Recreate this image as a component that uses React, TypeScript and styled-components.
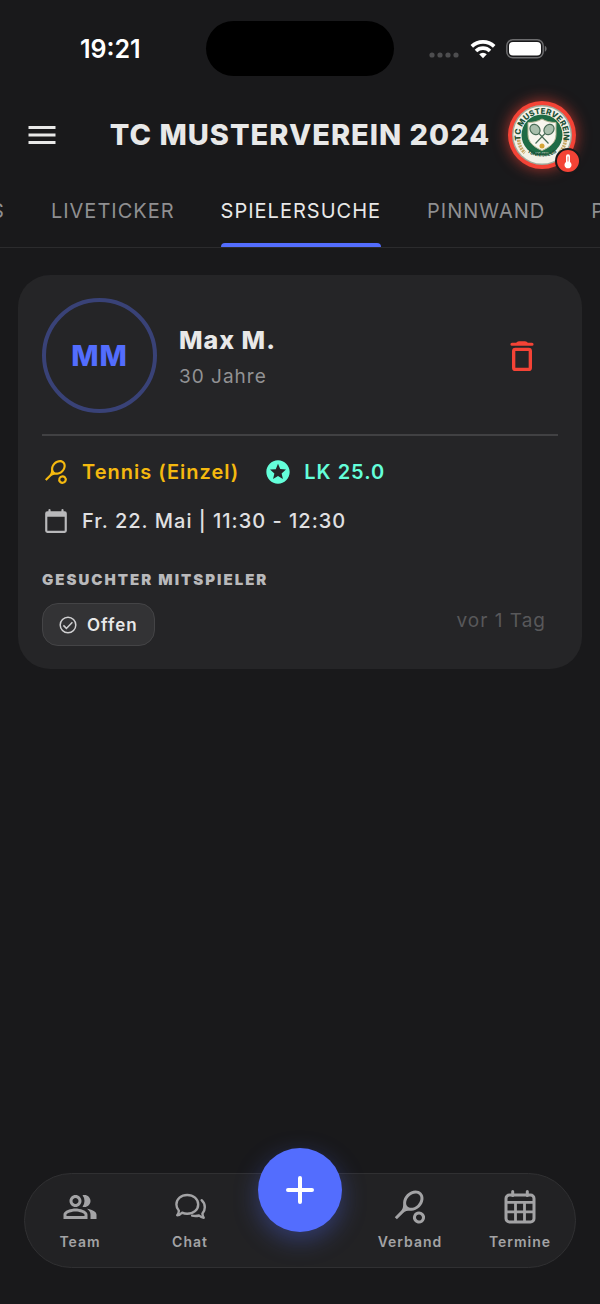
import React from 'react';
import styled, { createGlobalStyle } from 'styled-components';
import { MdMenu, MdOutlinePeopleAlt, MdSportsTennis, MdStars } from 'react-icons/md';

const GlobalStyle = createGlobalStyle`
  * {
    box-sizing: border-box;
  }
  body {
    margin: 0;
    background: #19191b;
    color: #e8e8e8;
    font-family: Inter, "Liberation Sans", sans-serif;
    overflow-x: hidden;
  }
  button {
    padding: 0;
    border: none;
    background: none;
    color: inherit;
    font: inherit;
    cursor: pointer;
  }
`;

const Screen = styled.div`
  display: flex;
  flex-direction: column;
  min-height: 100vh;
`;

const StatusBar = styled.div`
  display: grid;
  grid-template-columns: 1fr auto 1fr;
  align-items: center;
  padding: 21px 52px 0 80px;
`;

const Clock = styled.span`
  font-size: 25px;
  line-height: 28px;
  font-weight: 600;
  color: #fff;
`;

const Island = styled.div`
  width: 188px;
  height: 55px;
  margin-right: 28px;
  border-radius: 28px;
  background: #000;
`;

const StatusIcons = styled.div`
  display: flex;
  align-items: center;
  justify-content: flex-end;
  gap: 10px;
`;

const Header = styled.header`
  display: grid;
  grid-template-columns: 1fr auto 1fr;
  align-items: center;
  height: 118px;
  padding: 0 24px;
`;

const MenuButton = styled.button`
  display: flex;
  justify-self: start;
`;

const Title = styled.h1`
  margin: 0;
  font-size: 29px;
  line-height: 36px;
  font-weight: 800;
  letter-spacing: 1px;
  white-space: nowrap;
`;

const ClubButton = styled.button`
  position: relative;
  justify-self: end;
  width: 68px;
  height: 68px;
  border-radius: 34px;
  background: #f44336;
  box-shadow: 0 0 14px 1px rgba(244, 67, 54, 0.6);
`;

const ClubBadge = styled.span`
  position: absolute;
  right: -5px;
  bottom: -5px;
  display: flex;
  align-items: center;
  justify-content: center;
  width: 26px;
  height: 26px;
  border: 2px solid #19191b;
  border-radius: 13px;
  background: #f44336;
`;

const Tabs = styled.nav`
  display: flex;
  justify-content: center;
  gap: 46px;
  height: 54px;
  padding-right: 4px;
  border-bottom: 1px solid #2b2b2d;
  overflow: hidden;
`;

const Tab = styled.button<{ $active?: boolean }>`
  display: flex;
  flex: none;
  flex-direction: column;
  justify-content: space-between;
  height: 53px;
  padding-top: 5px;
  color: ${p => (p.$active ? '#e8e8e8' : '#8f8f91')};
  font-size: 20px;
  line-height: 24px;
  letter-spacing: 1px;
  &::after {
    content: '';
    width: 100%;
    height: 4px;
    border-radius: 4px 4px 0 0;
    background: ${p => (p.$active ? '#536dfe' : 'transparent')};
  }
`;

const Card = styled.article`
  margin: 27px 18px 0;
  padding: 23px 24px;
  border-radius: 32px;
  background: #252527;
`;

const Player = styled.div`
  display: flex;
  align-items: center;
  padding-bottom: 21px;
  border-bottom: 2px solid #414143;
`;

const Avatar = styled.div`
  display: flex;
  align-items: center;
  justify-content: center;
  width: 115px;
  height: 115px;
  margin-right: 22px;
  border: 4px solid #394277;
  border-radius: 50%;
  color: #536dfe;
  font-size: 29px;
  font-weight: 800;
  letter-spacing: 1px;
`;

const PlayerText = styled.div`
  flex: 1;
  padding-top: 7px;
`;

const Name = styled.h2`
  margin: 0;
  font-size: 25px;
  line-height: 36px;
  font-weight: 800;
  letter-spacing: 1px;
`;

const Age = styled.p`
  margin: 0;
  color: #929294;
  font-size: 19px;
  line-height: 38px;
  letter-spacing: 1px;
`;

const DeleteButton = styled.button`
  display: flex;
  margin-right: 16px;
`;

const Details = styled.div`
  display: flex;
  align-items: center;
  gap: 25px;
  margin-top: 20px;
`;

const Detail = styled.div<{ $color: string; $weight: number }>`
  display: flex;
  align-items: center;
  gap: 12px;
  color: ${p => p.$color};
  font-size: 20px;
  line-height: 32px;
  font-weight: ${p => p.$weight};
  letter-spacing: 1px;
`;

const DetailIcon = styled.span`
  display: flex;
  justify-content: center;
  width: 28px;
`;

const DateRow = styled(Details)`
  margin-top: 17px;
`;

const SectionLabel = styled.h3`
  margin: 33px 0 13px;
  color: #b9b9bb;
  font-size: 15px;
  line-height: 20px;
  font-weight: 900;
  letter-spacing: 2px;
`;

const CardFooter = styled.div`
  display: flex;
  align-items: flex-start;
  justify-content: space-between;
`;

const Chip = styled.div`
  display: flex;
  align-items: center;
  gap: 10px;
  height: 43px;
  padding: 0 16px;
  border: 1px solid #444446;
  border-radius: 16px;
  background: #333335;
  font-size: 17px;
  font-weight: 600;
  letter-spacing: 1px;
`;

const Posted = styled.time`
  margin-right: 12px;
  color: #58585a;
  font-size: 19px;
  line-height: 36px;
  letter-spacing: 1px;
`;

const BottomBar = styled.nav`
  display: grid;
  grid-template-columns: repeat(5, 1fr);
  height: 95px;
  margin: auto 24px 36px;
  border: 1px solid #303032;
  border-radius: 48px;
  background: #222224;
`;

const NavItem = styled.button`
  display: flex;
  flex-direction: column;
  align-items: center;
  padding-top: 15px;
  gap: 7px;
  color: #a3a3a5;
  font-size: 14px;
  line-height: 20px;
  font-weight: 600;
  letter-spacing: 1px;
`;

const AddButton = styled.button`
  display: flex;
  align-items: center;
  justify-content: center;
  justify-self: center;
  width: 84px;
  height: 84px;
  margin-top: -26px;
  border-radius: 42px;
  background: #536dfe;
  box-shadow: 0 8px 24px rgba(83, 109, 254, 0.35);
`;

const SignalDots = () => (
  <svg width="31" height="20" viewBox="0 0 31 20" fill="#4d4d4f">
    <circle cx="3" cy="16" r="2.6" />
    <circle cx="11" cy="16" r="2.6" />
    <circle cx="19" cy="16" r="2.6" />
    <circle cx="27" cy="16" r="2.6" />
  </svg>
);

const Wifi = () => (
  <svg width="26" height="20" viewBox="0 0 26 20" fill="none" stroke="#fff" strokeWidth="3.6">
    <path d="M1.8 7.4a16 16 0 0 1 22.4 0" />
    <path d="M6 12a10 10 0 0 1 14 0" />
    <path d="M13 19.3l-3.8-4a5.4 5.4 0 0 1 7.6 0z" fill="#fff" stroke="none" />
  </svg>
);

const Battery = () => (
  <svg width="42" height="20" viewBox="0 0 42 20">
    <rect x="0.8" y="0.8" width="36.4" height="18" rx="6" fill="none" stroke="#6c6c6e" strokeWidth="1.5" />
    <rect x="3" y="3" width="32" height="13.6" rx="4" fill="#fff" />
    <path d="M38.8 6.8c2.4 1 2.4 5 0 6z" fill="#6c6c6e" />
  </svg>
);

const ClubLogo = () => (
  <svg width="68" height="68" viewBox="0 0 68 68" role="img" aria-label="TC Musterverein">
    <defs>
      <path id="arcTop" d="M13 39a21.5 21.5 0 1 1 42 0" />
      <path id="arcBottom" d="M10 42a28 28 0 0 0 48 0" />
    </defs>
    <circle cx="34" cy="34" r="30" fill="#9eab9d" />
    <circle cx="34" cy="34" r="28.6" fill="#f3f1e7" />
    <circle cx="34" cy="34" r="20.5" fill="#1f6b45" />
    <path d="M34 18c4 2.5 9 3.5 14 3.5v12c0 8-6 12.500-14 16-8-3.500-14-8-14-16v-12C25 21.500 30 20.500 34 18z" fill="#f8f6ee" stroke="#b8b996" strokeWidth="1" />
    <g stroke="#496d57" strokeWidth="1.2">
      <ellipse cx="27" cy="28.5" rx="4.6" ry="5.6" transform="rotate(-42 27 28.5)" fill="#a9bfac" />
      <ellipse cx="41" cy="28.5" rx="4.6" ry="5.6" transform="rotate(42 41 28.5)" fill="#a9bfac" />
      <path d="M31 32.500l9.500 10M37 32.500l-9.500 10" />
    </g>
    <circle cx="34" cy="45" r="2.5" fill="#d5a537" />
    <g fill="none" stroke="#c8a867" strokeWidth="3.6" strokeDasharray="2 0.8">
      <path d="M10.500 36c0 8 3 13 7.500 17" />
      <path d="M57.500 36c0 8-3 13-7.500 17" />
    </g>
    <path d="M18 50c9 6 23 6 32 0l3 4c-9 9-29 9-38 0z" fill="#f3f1e7" />
    <path d="M24 49c6 2.500 14 2.500 20 0v3.500c-6 2-14 2-20 0z" fill="#1f6b45" />
    <text x="34" y="53" textAnchor="middle" fontSize="2.6" fontWeight="700" fill="#d8dfcf">EST. 2024</text>
    <text fontSize="8" fontWeight="800" fill="#1c5038" textAnchor="middle">
      <textPath href="#arcTop" startOffset="50%">TC MUSTERVEREIN</textPath>
    </text>
    <text fontSize="4.8" fontWeight="800" fill="#1c5038" textAnchor="middle">
      <textPath href="#arcBottom" startOffset="50%">TENNISCLUB</textPath>
    </text>
  </svg>
);

const Thermometer = () => (
  <svg width="10" height="16" viewBox="0 0 10 16" fill="none">
    <path d="M3 9V3.300a2 2 0 0 1 4 0V9a3.500 3.500 0 1 1-4 0z" fill="#fff" />
    <path d="M5 3.500v5" stroke="#f44336" strokeWidth="0.8" />
  </svg>
);

const Trash = () => (
  <svg width="40" height="40" viewBox="0 0 24 24" fill="#f44336">
    <path d="M15.500 4l-.7-.5a2 2 0 0 0-1-.3h-3.600a2 2 0 0 0-1 .3L8.500 4H6a.95.950 0 0 0 0 1.900h12a.95.950 0 0 0 0-1.900z" />
    <path fillRule="evenodd" d="M6 9a2 2 0 0 1 2-2h8a2 2 0 0 1 2 2v10a2 2 0 0 1-2 2H8a2 2 0 0 1-2-2zm2 0v10h8V9z" />
  </svg>
);

const Calendar = () => (
  <svg width="26" height="26" viewBox="0 0 24 24" fill="#b9b9bb">
    <path fillRule="evenodd" d="M20 3h-1V2a1 1 0 0 0-2 0v1H7V2a1 1 0 0 0-2 0v1H4a2 2 0 0 0-2 2v16a2 2 0 0 0 2 2h16a2 2 0 0 0 2-2V5a2 2 0 0 0-2-2zM4 8h16v13H4z" />
  </svg>
);

const CheckCircle = () => (
  <svg width="18" height="18" viewBox="0 0 18 18" fill="none" stroke="#d0d0d2" strokeWidth="1.5">
    <circle cx="9" cy="9" r="7.8" />
    <path d="M4.400 9.400l3 3L13.400 6.200" />
  </svg>
);

const Chats = () => (
  <svg width="36" height="36" viewBox="0 0 36 36" fill="none" stroke="currentColor" strokeWidth="2.4" strokeLinejoin="round" strokeLinecap="round">
    <path d="M15.200 6c6.200 0 11 4.100 11 9.400s-4.800 9.400-11 9.400c-1.900 0-3.600-.4-5.200-1.100-1.300 1.500-3 2.400-4.800 2.500 1-1.200 1.600-2.600 1.700-4.500-1.600-1.700-2.500-3.900-2.500-6.300C4.400 10.100 9.100 6 15.200 6z" />
    <path d="M29.600 11.200c2.100 1.900 3.200 4.300 3.200 7 0 2.500-.8 4.700-2.400 6.400.2 1.800.6 3 1.300 4.100-1.800-.1-3.400-.9-4.600-2.200-2.300.7-4.700.7-7 .1" />
  </svg>
);

const CalendarGrid = () => (
  <svg width="36" height="36" viewBox="0 0 36 36" fill="none" stroke="currentColor" strokeWidth="3">
    <rect x="4" y="6" width="28" height="27" rx="3.5" />
    <path d="M4 13.300h28M4 22.800h28M13.500 13v20M22.500 13v20" strokeWidth="2.8" />
    <path d="M10.700 2.500v4M25.300 2.500v4" strokeLinecap="round" />
  </svg>
);

const Plus = () => (
  <svg width="30" height="30" viewBox="0 0 30 30" stroke="#fff" strokeWidth="4" strokeLinecap="round">
    <path d="M15 3v24M3 15h24" />
  </svg>
);

const tabs = ['S', 'LIVETICKER', 'SPIELERSUCHE', 'PINNWAND', 'P'];

const App: React.FC = () => {
  return (
    <Screen>
      <GlobalStyle />
      <StatusBar>
        <Clock>19:21</Clock>
        <Island />
        <StatusIcons>
          <SignalDots />
          <Wifi />
          <Battery />
        </StatusIcons>
      </StatusBar>
      <Header>
        <MenuButton aria-label="Menü">
          <MdMenu size={36} />
        </MenuButton>
        <Title>TC MUSTERVEREIN 2024</Title>
        <ClubButton aria-label="Verein">
          <ClubLogo />
          <ClubBadge>
            <Thermometer />
          </ClubBadge>
        </ClubButton>
      </Header>
      <Tabs>
        {tabs.map(x => (
          <Tab key={x} $active={x === 'SPIELERSUCHE'}>{x}</Tab>
        ))}
      </Tabs>
      <main>
        <Card>
          <Player>
            <Avatar>MM</Avatar>
            <PlayerText>
              <Name>Max M.</Name>
              <Age>30 Jahre</Age>
            </PlayerText>
            <DeleteButton aria-label="Löschen">
              <Trash />
            </DeleteButton>
          </Player>
          <Details>
            <Detail $color="#f5b90f" $weight={600}>
              <DetailIcon>
                <MdSportsTennis size={26} />
              </DetailIcon>
              Tennis (Einzel)
            </Detail>
            <Detail $color="#64ffda" $weight={600}>
              <DetailIcon>
                <MdStars size={28} />
              </DetailIcon>
              LK 25.0
            </Detail>
          </Details>
          <DateRow>
            <Detail $color="#e0e0e2" $weight={500}>
              <DetailIcon>
                <Calendar />
              </DetailIcon>
              Fr. 22. Mai | 11:30 - 12:30
            </Detail>
          </DateRow>
          <SectionLabel>GESUCHTER MITSPIELER</SectionLabel>
          <CardFooter>
            <Chip>
              <CheckCircle />
              Offen
            </Chip>
            <Posted>vor 1 Tag</Posted>
          </CardFooter>
        </Card>
      </main>
      <BottomBar>
        <NavItem>
          <MdOutlinePeopleAlt size={36} />
          Team
        </NavItem>
        <NavItem>
          <Chats />
          Chat
        </NavItem>
        <AddButton aria-label="Hinzufügen">
          <Plus />
        </AddButton>
        <NavItem>
          <MdSportsTennis size={36} />
          Verband
        </NavItem>
        <NavItem>
          <CalendarGrid />
          Termine
        </NavItem>
      </BottomBar>
    </Screen>
  );
};

export default App;
